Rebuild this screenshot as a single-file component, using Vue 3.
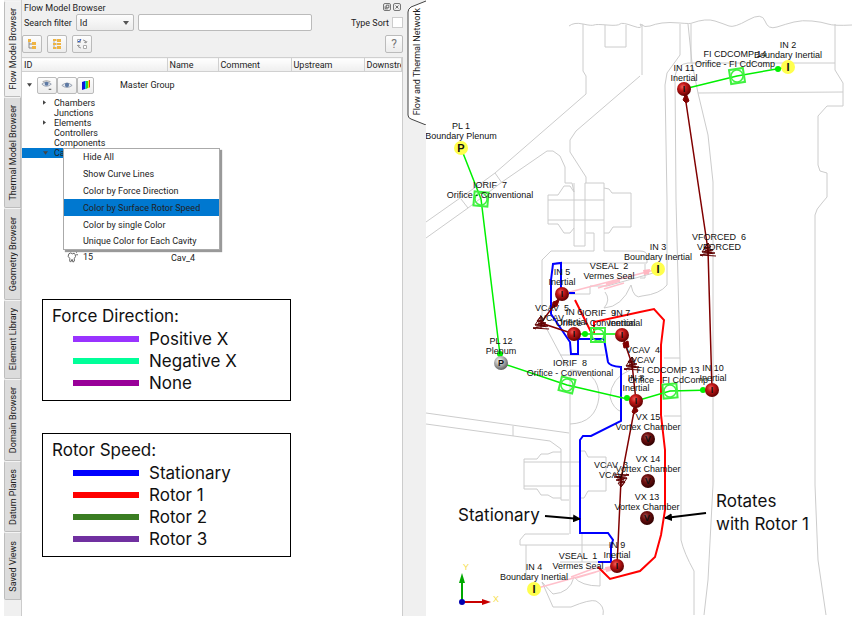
<script setup>
/**
 * App.vue — flow model browser with the thermal network view
 */
import { ref } from 'vue'

const tabs = ['Flow Model Browser', 'Thermal Model Browser', 'Geometry Browser', 'Element Library', 'Domain Browser', 'Datum Planes', 'Saved Views']
const activeTab = ref('Flow Model Browser')
const filterType = ref('Id')
const filterText = ref('')
const typeSort = ref(false)

const columns = ['ID', 'Name', 'Comment', 'Upstream', 'Downstream']
const groups = [
  { name: 'Chambers', arrow: true },
  { name: 'Junctions' },
  { name: 'Elements', arrow: true },
  { name: 'Controllers' },
  { name: 'Components' },
]

const menuItems = ['Hide All', 'Show Curve Lines', 'Color by Force Direction', 'Color by Surface Rotor Speed', 'Color by single Color', 'Unique Color for Each Cavity']
const activeItem = ref('Color by Surface Rotor Speed')

const legends = [
  {
    title: 'Force Direction:',
    rows: [
      { name: 'Positive X', color: '#9933ff' },
      { name: 'Negative X', color: '#00ff99' },
      { name: 'None', color: '#990099' },
    ],
  },
  {
    title: 'Rotor Speed:',
    rows: [
      { name: 'Stationary', color: '#0000ff' },
      { name: 'Rotor 1', color: '#ff0000' },
      { name: 'Rotor 2', color: '#3a7d22' },
      { name: 'Rotor 3', color: '#7030a0' },
    ],
  },
]

// casing and disc outlines
const outlines = [
  'M569 26Q574 22 583 24T594 25T607 25T620 24T633 26T640 24Q645 28 650 26T662 23T680 23T692 23Q706 18 715 21T729 26T748 20T765 21T777 27T794 22T812 21T828 24T852 25',
  'M583 24V71L586 76V94L495 173L480 184L426 222',
  'M426 238L468 208L502 182L547 151H553L560 156L565 167V183H572L574 192',
  'M495 173L502 183M461 199L468 208',
  'M605 25V47H626V25M642 24V75',
  'M640 76L576 131L570 140V152L586 177V183',
  'M574 183V246H585V183H604V251M586 233H594V251H551L542 260V320L567 367',
  'M548 200V195H558L564 186H570L574 192M548 200H604M548 200V224H558L564 233H570L574 228M548 220H604',
  'M604 188L609 189L612 193H631V227H613L609 233H604',
  'M604 251H640Q647 251 647 256V263H556M645 264V278H640M567 294H590V286H607L657 272',
  'M605 292Q611 300 604 308Q622 307 631 285Q634 300 642 296Q660 294 667 285V200L665 85L667 73L680 55V24',
  'M835 63H688Q677 64 675 76L676 200L680 358L681 416V540Q684 553 694 571V615',
  'M664 358H680M664 416H681',
  'M688 24L692 63L698 93L708 135L713 182V485L708 580L704 615M691 24V63',
  'M835 24V70L843 83V106H827L818 116V165L820 171L827 173V197L822 203Q816 209 815 215V485L818 560L826 615M698 93L843 92',
  'M560 355H605M570 370V534M570 370Q599 370 599 397Q596 423 570 424M630 370Q611 378 610 397Q613 409 622 412',
  'M426 413L569 433M426 424L550 441L561 449V500H569M513 426V436',
  'M561 452H553L548 454H541L537 459H524V489H537L541 495H548L553 498H561M524 462H580M524 486H580',
  'M581 451H585L588 457H606V491H588L584 498H580',
  'M569 534H525L520 540V545H612M526 545V580M582 533V562M560 562H598',
  'M542 582Q550 591 553 594Q570 593 574 577Q581 586 600 586V572M542 582L553 607H571Q590 599 596 601Q605 606 603 615',
]

const nodes = [
  { x: 461, y: 148, kind: 'boundary', mark: 'P' },
  { x: 501, y: 363, kind: 'plenum', mark: 'P' },
  { x: 788, y: 67, kind: 'boundary', mark: 'I' },
  { x: 658, y: 269, kind: 'boundary', mark: 'I' },
  { x: 534, y: 589, kind: 'boundary', mark: 'I' },
  { x: 684, y: 89, kind: 'inertial', mark: 'I' },
  { x: 562, y: 294, kind: 'inertial', mark: 'I' },
  { x: 574, y: 334, kind: 'inertial', mark: 'I' },
  { x: 622, y: 335, kind: 'inertial', mark: 'I' },
  { x: 636, y: 401, kind: 'inertial', mark: 'I' },
  { x: 712, y: 390, kind: 'inertial', mark: 'I' },
  { x: 617, y: 566, kind: 'inertial', mark: 'I' },
  { x: 648, y: 439, kind: 'vortex', mark: 'V' },
  { x: 648, y: 481, kind: 'vortex', mark: 'V' },
  { x: 647, y: 518, kind: 'vortex', mark: 'V' },
]

const orifices = [
  { x: 481, y: 199, turn: 5 },
  { x: 567, y: 385, turn: 14 },
  { x: 598, y: 335, turn: 0 },
  { x: 670, y: 391, turn: -5 },
  { x: 737, y: 76, turn: -9 },
]

// vortex elements, drawn as stacked cones
const cones = [
  { x: 541, y: 323, turn: 0 },
  { x: 632, y: 364, turn: 0 },
  { x: 708, y: 250, turn: 0 },
  { x: 621, y: 480, turn: 180 },
]

const labels = [
  { x: 461, y: 129, id: 'PL 1', type: 'Boundary Plenum' },
  { x: 490, y: 188, id: 'IORIF  7', type: 'Orifice - Conventional' },
  { x: 501, y: 344, id: 'PL 12', type: 'Plenum' },
  { x: 562, y: 275, id: 'IN 5', type: 'Inertial' },
  { x: 609, y: 269, id: 'VSEAL  2', type: 'Vermes Seal' },
  { x: 658, y: 250, id: 'IN 3', type: 'Boundary Inertial' },
  { x: 552, y: 311, id: 'VCAV  5', type: 'VCAV' },
  { x: 574, y: 315, id: 'IN 6', type: 'Inertial' },
  { x: 599, y: 316, id: 'IORIF  9', type: 'Orifice - Conventional' },
  { x: 622, y: 316, id: 'IN 7', type: 'Inertial' },
  { x: 570, y: 366, id: 'IORIF  8', type: 'Orifice - Conventional' },
  { x: 643, y: 353, id: 'VCAV  4', type: 'VCAV' },
  { x: 668, y: 373, id: 'FI CDCOMP 13', type: 'Orifice - FI CdComp' },
  { x: 636, y: 381, id: 'IN 8', type: 'Inertial' },
  { x: 713, y: 371, id: 'IN 10', type: 'Inertial' },
  { x: 719, y: 240, id: 'VFORCED  6', type: 'VFORCED' },
  { x: 684, y: 71, id: 'IN 11', type: 'Inertial' },
  { x: 735, y: 57, id: 'FI CDCOMP 14', type: 'Orifice - FI CdComp' },
  { x: 788, y: 48, id: 'IN 2', type: 'Boundary Inertial' },
  { x: 648, y: 420, id: 'VX 15', type: 'Vortex Chamber' },
  { x: 648, y: 462, id: 'VX 14', type: 'Vortex Chamber' },
  { x: 647, y: 500, id: 'VX 13', type: 'Vortex Chamber' },
  { x: 611, y: 468, id: 'VCAV  3', type: 'VCAV' },
  { x: 617, y: 548, id: 'IN 9', type: 'Inertial' },
  { x: 578, y: 559, id: 'VSEAL  1', type: 'Vermes Seal' },
  { x: 534, y: 570, id: 'IN 4', type: 'Boundary Inertial' },
]
</script>

<template>
  <div class="app">
    <nav class="tabs">
      <button v-for="t in tabs" :key="t" class="tab" :class="{ active: t === activeTab }" @click="activeTab = t">
        <span>{{ t }}</span>
      </button>
    </nav>

    <section class="panel">
      <header class="title">
        <h1>Flow Model Browser</h1>
        <div class="window-buttons">
          <button aria-label="Float">
            <svg viewBox="0 0 8 8"><path d="M3 1.5h3.500V5H3zM1.500 3v3.500H5" /></svg>
          </button>
          <button aria-label="Close">
            <svg viewBox="0 0 8 8"><path d="M2 2l4 4M6 2L2 6" /></svg>
          </button>
        </div>
      </header>

      <div class="filter">
        <label for="filter-type">Search filter</label>
        <div class="select">
          <select id="filter-type" v-model="filterType">
            <option>Id</option>
          </select>
          <svg viewBox="0 0 6 4"><path d="M0 0h6L3 4z" /></svg>
        </div>
        <input v-model="filterText" class="search" type="text" aria-label="Search" />
        <label class="sort">Type Sort <input v-model="typeSort" type="checkbox" /></label>
      </div>

      <div class="toolbar">
        <button class="tool" aria-label="Collapse">
          <svg viewBox="0 0 12 12">
            <path d="M3 3v7h4M3 6h4" fill="none" stroke="#888" />
            <path d="M2 1h3v3H2zM6 4h4v3H6zM6 8h4v3H6z" fill="#efb443" />
          </svg>
        </button>
        <button class="tool" aria-label="Expand">
          <svg viewBox="0 0 12 12">
            <path d="M3 2v8h4M3 6h4M3 2h4" fill="none" stroke="#aaa" />
            <path d="M2 1h3v2H2zM2 5h3v2H2zM2 9h3v2H2zM6 1h4v3H6zM6 5h4v2H6zM6 8h4v3H6z" fill="#efb443" />
          </svg>
        </button>
        <button class="tool" aria-label="Select">
          <svg viewBox="0 0 12 12">
            <path d="M1.500 1.500h3v3h-3zM7.500 7.500h3v3h-3z" fill="#fff" stroke="#aaa" />
            <path d="M2 3l1 1 2-3" fill="none" stroke="#2455c8" />
            <path d="M7 2q3 0 3 3M8 4l2 1 1-2M2 7q0 3 3 3M1 8l1-1 2 1" fill="none" stroke="#999" />
          </svg>
        </button>
        <button class="tool help">?</button>
      </div>

      <div class="tree">
        <table>
          <colgroup>
            <col class="col-id" /><col class="col-name" /><col class="col-wide" /><col class="col-wide" /><col />
          </colgroup>
          <thead>
            <tr><th v-for="c in columns" :key="c">{{ c }}</th></tr>
          </thead>
          <tbody>
            <tr class="master">
              <td colspan="5">
                <div class="master-row">
                  <svg class="arrow" viewBox="0 0 6 4"><path d="M0 0h6L3 4z" /></svg>
                  <button class="tool" aria-label="Hide group">
                    <svg viewBox="0 0 14 12">
                      <path d="M1 5Q6 0 12 5Q6 10 1 5z" fill="#e8edf4" stroke="#8c96a6" />
                      <circle cx="6.500" cy="4.500" r="2.300" fill="#5d79a3" />
                      <path d="M2 2Q6 0 11 2" fill="none" stroke="#999" />
                      <path d="M9 11h3" stroke="#333" />
                    </svg>
                  </button>
                  <button class="tool" aria-label="Show group">
                    <svg viewBox="0 0 14 12">
                      <path d="M1 6.500Q7 1 13 6.500Q7 11 1 6.500z" fill="#e8edf4" stroke="#8c96a6" />
                      <circle cx="7" cy="6" r="2.500" fill="#5d79a3" />
                    </svg>
                  </button>
                  <button class="tool" aria-label="Color group">
                    <svg viewBox="0 0 12 12">
                      <path d="M2 3l3-1v8l-3 1z" fill="#1414d8" />
                      <path d="M5 2h1v8H5z" fill="#00c8f0" />
                      <path d="M6 2h2v7l-2 1z" fill="#35d52b" />
                      <path d="M8 2l1-1v8H8z" fill="#f5e61a" />
                      <path d="M9 1h1l-0 7-1 1z" fill="#e23a18" />
                    </svg>
                  </button>
                  <span>Master Group</span>
                </div>
              </td>
            </tr>
            <tr v-for="g in groups" :key="g.name" class="group">
              <td>
                <svg v-if="g.arrow" class="branch" viewBox="0 0 4 6"><path d="M0 0l4 3-4 3z" /></svg>
                {{ g.name }}
              </td>
            </tr>
            <tr class="group selected">
              <td>
                <svg class="branch open" viewBox="0 0 6 4"><path d="M0 0h6L3 4z" /></svg>
                Cavities
              </td>
            </tr>
            <tr class="cavity">
              <td>
                <div class="cavity-row">
                  <svg viewBox="0 0 12 12"><path d="M2 2Q4 0 6 2Q8 0 9 3Q10 5 8 7V10L6.500 11L5.500 8L4 11L3 10V7Q0 5 2 2zM10 1l1-1M10 3h2" /></svg>
                  15
                </div>
              </td>
              <td>Cav_4</td>
            </tr>
          </tbody>
        </table>

        <div class="menu" role="menu">
          <button v-for="m in menuItems" :key="m" role="menuitem" :class="{ active: m === activeItem }" @click="activeItem = m">
            {{ m }}
          </button>
        </div>
      </div>

      <div class="legends">
        <div v-for="l in legends" :key="l.title" class="legend">
          <h2>{{ l.title }}</h2>
          <ul>
            <li v-for="r in l.rows" :key="r.name">
              <i :style="{ background: r.color }"></i>{{ r.name }}
            </li>
          </ul>
        </div>
      </div>
    </section>

    <aside class="view-tab">
      <button>
        <svg viewBox="0 0 19 125"><path d="M19 1L4 7Q1 9 1 12V115Q1 118 4 119L19 125" /></svg>
        <span>Flow and Thermal Network</span>
      </button>
    </aside>

    <main class="canvas">
      <svg viewBox="426 0 433 616">
        <defs>
          <radialGradient id="red-ball" cx="0.4" cy="0.35" r="0.65">
            <stop offset="0" stop-color="#f06060" />
            <stop offset="0.4" stop-color="#c41818" />
            <stop offset="1" stop-color="#600000" />
          </radialGradient>
          <radialGradient id="dark-ball" cx="0.4" cy="0.35" r="0.65">
            <stop offset="0" stop-color="#a05050" />
            <stop offset="0.4" stop-color="#701010" />
            <stop offset="1" stop-color="#300000" />
          </radialGradient>
          <radialGradient id="grey-ball" cx="0.4" cy="0.35" r="0.65">
            <stop offset="0" stop-color="#ffffff" />
            <stop offset="0.5" stop-color="#b0b0b0" />
            <stop offset="1" stop-color="#606060" />
          </radialGradient>
          <marker id="black-arrow" viewBox="0 0 8 8" refX="7" refY="4" markerWidth="8" markerHeight="8" markerUnits="userSpaceOnUse" orient="auto">
            <path d="M0 0l8 4-8 4z" />
          </marker>
        </defs>

        <path v-for="d in outlines" :key="d" class="outline" :d="d" />

        <!-- vermes seals -->
        <path class="seal" d="M562 294L658 269M534 589L617 566M598 288l22-7M604 289l20-6M606 284l14-4M571 577l24-9M576 578l20-6" />
        <path class="seal-dot" d="M643 270l7-1-1 5-5 1zM605 567l7-1-1 5-5 1z" />

        <!-- cavity surfaces -->
        <path class="stationary" d="M561 292V263L553 264L551 280V314L570 342L571 354H578V339H604L608 362Q609 366 621 367V421L591 436H583L580 440V533H608L613 540L611 546V562H598M569 293H575" />
        <path class="rotor" d="M575 300L592 334M594 333V322L640 312L654 309L664 320L661 345V415L665 450V510L661 535L655 557L640 571L610 579L598 567" />

        <!-- flow links -->
        <path class="flow" d="M461 148L481 199L501 363L567 385L636 401L670 391L712 390M574 334H622M684 89L737 76L788 67" />
        <g class="flow-dots">
          <circle cx="500" cy="354" r="3" />
          <circle cx="627" cy="398" r="3" />
          <circle cx="703" cy="390" r="3" />
          <circle cx="585" cy="334" r="3" />
          <circle cx="778" cy="69" r="3" />
        </g>
        <path class="vortex-link" d="M712 390L708 250L684 89M562 294L541 323L574 334M622 335L632 364L636 401L621 480L617 566" />
        <path class="vortex-dot" d="M683 100l3-7 3 8-3 2zM553 302l6-2-2 6-5 2zM623 343l5-2 1 6-5 1zM632 412l3-7 3 6-4 3z" />

        <g v-for="c in cones" :key="c.x + '-' + c.y" :transform="`translate(${c.x} ${c.y}) rotate(${c.turn})`">
          <path class="cone" d="M0 -7L3 -3L-4 -2L5 0L-6 2L7 3L-8 5L8 6M0 -7L-4 -2M-6 2L0 -7M0 -7V6M-8 5L-5 6M-3 0L4 3" />
          <path class="cone-core" d="M0 -7L5 4L-5 4z" />
        </g>

        <g v-for="o in orifices" :key="o.x" class="orifice" :transform="`translate(${o.x} ${o.y}) rotate(${o.turn})`">
          <rect x="-7" y="-7" width="14" height="14" />
          <circle r="6" />
        </g>

        <g v-for="n in nodes" :key="n.x + '-' + n.y" :class="['node', n.kind]">
          <circle :cx="n.x" :cy="n.y" r="7" />
          <text :x="n.x" :y="n.y + (n.kind === 'boundary' ? 4 : 3)">{{ n.mark }}</text>
        </g>

        <g v-for="l in labels" :key="l.id" class="label">
          <text :x="l.x" :y="l.y">{{ l.id }}</text>
          <text :x="l.x" :y="l.y + 10">{{ l.type }}</text>
        </g>

        <!-- callouts -->
        <g class="callout">
          <text x="458" y="521">Stationary</text>
          <text x="716" y="507">Rotates</text>
          <text x="716" y="530">with Rotor 1</text>
          <path d="M545 516L580 519" marker-end="url(#black-arrow)" />
          <path d="M706 513L665 518" marker-end="url(#black-arrow)" />
        </g>

        <!-- axis triad -->
        <g class="triad">
          <path d="M462 602V580" stroke="#00a800" />
          <path d="M459 583l3-10 3 10z" fill="#00a800" />
          <path d="M462 602H484" stroke="#c80000" />
          <path d="M482 599l9 3-9 3z" fill="#c80000" />
          <circle cx="462" cy="602" r="3" fill="#0000b0" />
          <text x="463" y="570">Y</text>
          <text x="493" y="602">X</text>
        </g>
      </svg>
    </main>
  </div>
</template>

<style>
body {
  background: #fff;
}
</style>

<style scoped>
.app {
  display: flex;
  margin-left: 4px;
  font-family: Roboto, sans-serif;
  font-size: 9px;
  line-height: 10px;
  color: #222;
}

button, input, select {
  font: inherit;
  color: inherit;
  box-sizing: border-box;
  margin: 0;
  padding: 0;
}

/* side tabs */
.tabs {
  display: grid;
  grid-template-rows: 96px 111px 92px 79px 82px 71px 68px;
  width: 17px;
  padding-top: 1px;
  background: #f0f0f0;
  box-sizing: border-box;
}
.tab {
  display: flex;
  align-items: center;
  justify-content: center;
  background: #dcdcdc;
  border: 1px solid #bdbdbd;
  border-top-color: #f4f4f4;
  border-radius: 2px 0 0 2px;
}
.tab.active { background: #f0f0f0; border-right-color: #f0f0f0; }
.tab span { writing-mode: vertical-rl; transform: rotate(180deg); white-space: nowrap; }

/* browser panel */
.panel {
  width: 382px;
  flex-shrink: 0;
  display: flex;
  flex-direction: column;
  background: #f0f0f0;
  border-left: 1px solid #ccc;
  box-sizing: border-box;
}
.title { display: flex; justify-content: space-between; padding: 3px 2px 1px; }
.title h1 { margin: 0; font-size: 9px; font-weight: 400; }
.window-buttons { display: flex; gap: 2px; }
.window-buttons button { width: 8px; height: 8px; border: 1px solid #777; border-radius: 2px; background: #eee; display: flex; }
.window-buttons svg { width: 100%; fill: none; stroke: #444; }

.filter { display: flex; align-items: center; padding: 0 0 0 2px; height: 17px; }
.select { position: relative; width: 58px; height: 17px; margin: 0 4px; }
.select select {
  appearance: none;
  width: 100%;
  height: 100%;
  padding-left: 3px;
  border: 1px solid #bbb;
  border-radius: 2px;
  background: linear-gradient(#fdfdfd, #ececec);
}
.select svg { position: absolute; right: 5px; top: 7px; width: 6px; height: 4px; fill: #555; }
.search { width: 174px; height: 17px; border: 1px solid #bbb; border-radius: 2px; background: #fff; }
.sort { display: flex; align-items: center; gap: 3px; margin-left: auto; }
.sort input { appearance: none; width: 11px; height: 11px; border: 1px solid #ccc; background: #fff; }

.toolbar { display: flex; gap: 5px; padding: 4px 0; }
.tool {
  display: flex;
  align-items: center;
  justify-content: center;
  width: 20px;
  height: 18px;
  border: 1px solid #bbb;
  border-radius: 2px;
  background: linear-gradient(#fdfdfd, #ececec);
}
.tool svg { width: 12px; height: 12px; }
.help { width: 18px; margin-left: auto; font-size: 12px; color: #777; }

/* model tree */
.tree { position: relative; background: #fff; border-right: 1px solid #ccc; }
table { width: 100%; table-layout: fixed; border-collapse: collapse; }
.col-id { width: 145px; }
.col-name { width: 51px; }
.col-wide { width: 73px; }
th {
  height: 14px;
  padding: 0 0 0 2px;
  border: 1px solid #d0d0d0;
  border-left: none;
  box-sizing: border-box;
  background: linear-gradient(#fff, #eee);
  font-weight: 400;
  text-align: left;
  overflow: hidden;
}
td { padding: 0; white-space: nowrap; }
.master-row { display: flex; align-items: center; height: 26px; padding-left: 5px; }
.master-row .tool { height: 17px; }
.master-row .tool:last-of-type { width: 17px; }
.master-row span { margin-left: 26px; }
.arrow { width: 5px; height: 4px; margin-right: 5px; fill: #444; }
.group td { position: relative; height: 10px; padding-left: 32px; }
.branch { position: absolute; left: 21px; top: 2px; width: 3px; height: 5px; fill: #444; }
.branch.open { top: 3px; width: 5px; height: 4px; }
.selected td { background: #0078d0; }
.cavity td { padding: 94px 0 0 4px; }
.cavity-row { display: flex; gap: 5px; padding-left: 41px; }
.cavity svg { width: 11px; height: 11px; fill: none; stroke: #555; }

.menu {
  position: absolute;
  left: 41px;
  top: 91px;
  width: 157px;
  display: flex;
  flex-direction: column;
  background: #fff;
  border: 1px solid #aaa;
  box-shadow: 2px 2px 1px #999;
  box-sizing: border-box;
}
.menu button { height: 17px; padding-left: 19px; border: none; background: none; text-align: left; }
.menu button:first-child, .menu button:last-child { height: 16px; }
.menu .active { background: #0078d0; }

/* colour legends */
.legends {
  flex: 1;
  display: flex;
  flex-direction: column;
  gap: 32px;
  padding: 36px 0 0 20px;
  background: #fff;
  border-right: 1px solid #ccc;
  font-family: Inter, sans-serif;
  font-size: 17px;
  line-height: 22px;
  color: #111;
}
.legend { width: 249px; padding: 4px 9px 6px; border: 1px solid #000; box-sizing: border-box; background: #fff; }
.legend h2 { margin: 0; font-size: 17px; font-weight: 400; line-height: 24px; }
.legend ul { margin: 0; padding: 0 0 0 21px; list-style: none; }
.legend li { display: flex; align-items: center; gap: 10px; }
.legend i { width: 66px; height: 6px; }

/* view tab */
.view-tab { width: 23px; flex-shrink: 0; background: #f0f0f0; }
.view-tab button { position: relative; display: block; width: 19px; height: 125px; margin-left: 4px; border: none; background: none; }
.view-tab svg { position: absolute; inset: 0; fill: #fff; stroke: #444; }
.view-tab span { position: relative; writing-mode: vertical-rl; transform: rotate(180deg); white-space: nowrap; }

/* network canvas */
.canvas { flex: 1; min-width: 0; }
.canvas > svg { display: block; width: 100%; }
.outline { fill: none; stroke: #ccc; }
.seal { fill: none; stroke: #ffc0cb; stroke-width: 1.5; }
.seal-dot { fill: #ffb6c1; }
.stationary { fill: none; stroke: #0000ff; stroke-width: 2; }
.rotor { fill: none; stroke: #ff0000; stroke-width: 2; }
.flow { fill: none; stroke: #00f000; stroke-width: 1.5; }
.flow-dots { fill: #00f000; }
.vortex-link { fill: none; stroke: #800000; stroke-width: 1.5; }
.vortex-dot { fill: #800000; stroke: #800000; }
.cone { fill: none; stroke: #600000; stroke-width: 1; }
.cone-core { fill: #600000; fill-opacity: 0.5; }
.orifice { fill: none; stroke: #3ff23f; stroke-width: 2; }
.orifice circle { stroke-width: 1.5; }

.node text { font: 700 11px "Liberation Sans", sans-serif; text-anchor: middle; fill: #111; }
.boundary circle { fill: #ffff4d; }
.plenum circle { fill: url(#grey-ball); }
.inertial circle { fill: url(#red-ball); }
.vortex circle { fill: url(#dark-ball); }
.node.inertial text, .node.plenum text, .node.vortex text { font-size: 9px; }

.label text { font: 9px "Liberation Sans", sans-serif; text-anchor: middle; white-space: pre; fill: #111; }
.callout text { font: 17px Inter, sans-serif; fill: #111; }
.callout path { fill: none; stroke: #000; stroke-width: 2; }
.callout marker path { fill: #000; stroke: none; }
.triad path { stroke-width: 2; }
.triad text { font: 9px "Liberation Sans", sans-serif; fill: #f5e050; }
</style>
